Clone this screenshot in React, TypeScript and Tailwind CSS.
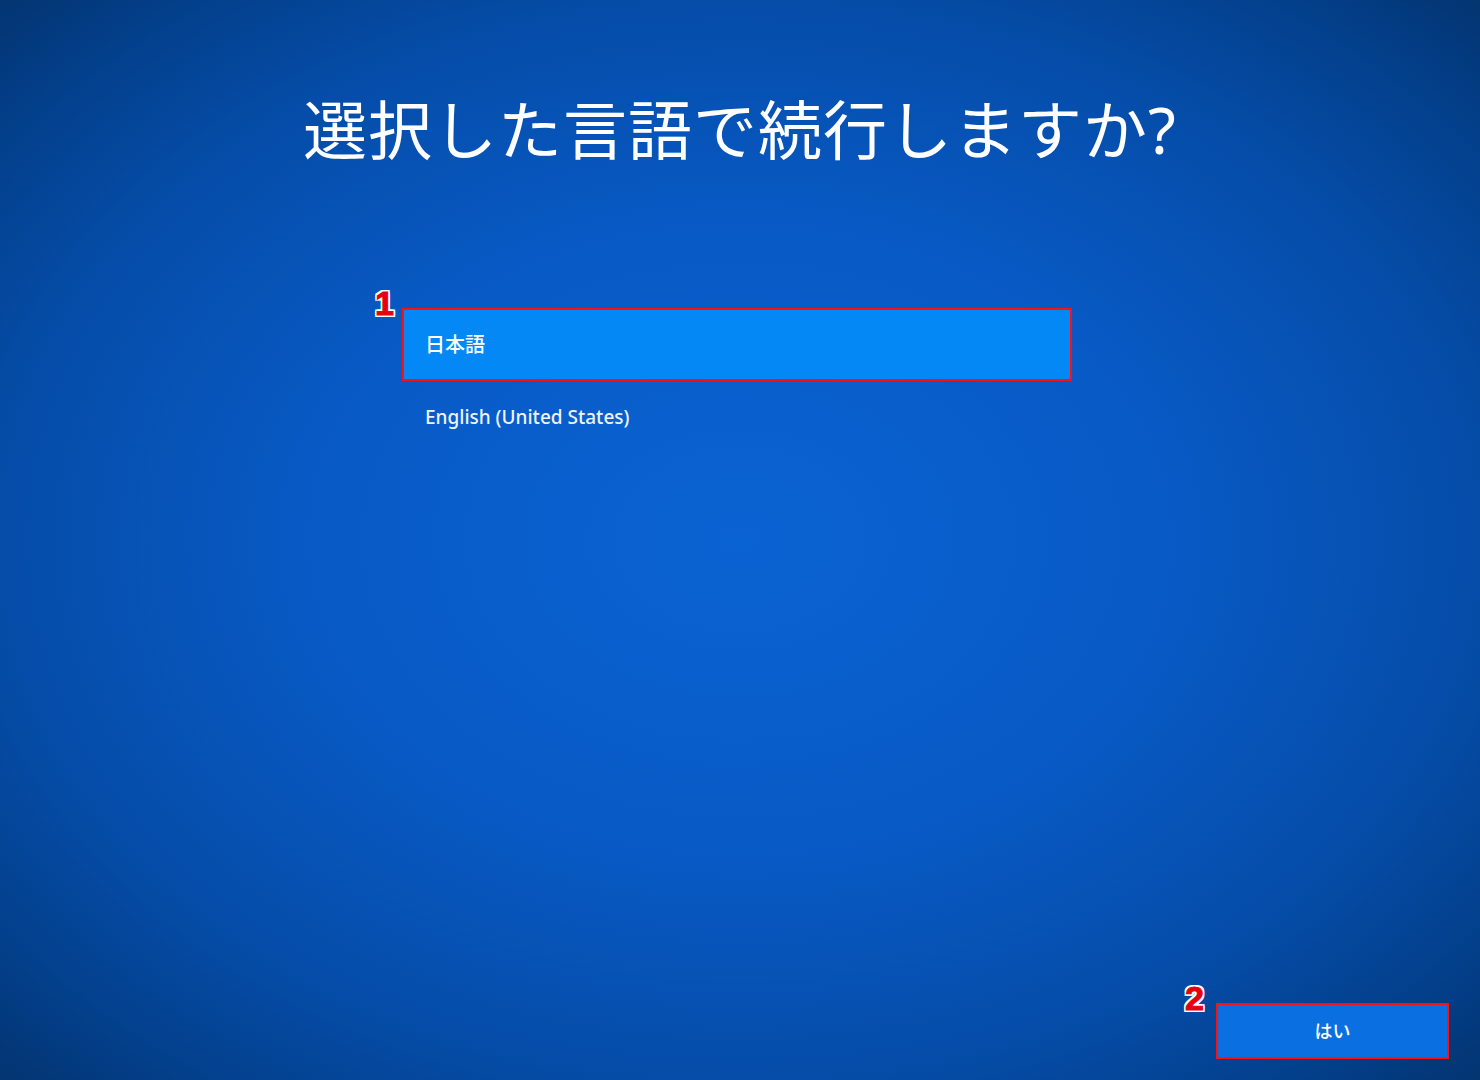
export default function App() {
  return (
    <div
      className="relative flex h-[1080px] w-[1480px] flex-col overflow-hidden text-white"
      style={{
        background:
          'radial-gradient(ellipse 72% 72% at 50% 50%, #0a63d2 0%, #085ac6 40%, #054ca7 70%, #033e88 88%, #03336c 100%)',
        fontFamily: '"Noto Sans", "Noto Sans CJK JP", sans-serif',
      }}
    >
      <h1 className="mt-[88px] text-center text-[64px] font-normal leading-[84px] tracking-[1px]">
        選択した言語で続行しますか?
      </h1>

      <div className="mt-[136px] flex flex-col pl-[402px]">
        <div className="relative">
          <span
            className="absolute -left-[27px] -top-[22px] text-[34px] font-black leading-none text-[#e60012] [-webkit-text-stroke:1px_#e60012] [text-shadow:2px_0_0_#fff,-2px_0_0_#fff,0_2px_0_#fff,0_-2px_0_#fff,2px_2px_0_#fff,-2px_-2px_0_#fff,2px_-2px_0_#fff,-2px_2px_0_#fff]"
            style={{ fontFamily: '"Liberation Sans", Arial, sans-serif' }}
          >
            1
          </span>
          <div className="flex h-[73px] w-[670px] items-center border-2 border-[#ff1010] bg-[#0488f5] pl-[21px] text-[20px] font-medium">
            日本語
          </div>
        </div>
        <div className="flex h-[73px] items-center pl-[23px] text-[19px] font-medium text-[#eef4ff]">
          English (United States)
        </div>
      </div>

      <div className="mt-auto mb-[21px] mr-[31px] flex justify-end">
        <div className="relative">
          <span
            className="absolute -left-[31px] -top-[22px] text-[34px] font-black leading-none text-[#e60012] [-webkit-text-stroke:1px_#e60012] [text-shadow:2px_0_0_#fff,-2px_0_0_#fff,0_2px_0_#fff,0_-2px_0_#fff,2px_2px_0_#fff,-2px_-2px_0_#fff,2px_-2px_0_#fff,-2px_2px_0_#fff]"
            style={{ fontFamily: '"Liberation Sans", Arial, sans-serif' }}
          >
            2
          </span>
          <div className="flex h-[56px] w-[233px] items-center justify-center border-2 border-[#ff1010] bg-[#0a6fe0] text-[18px] font-medium">
            はい
          </div>
        </div>
      </div>
    </div>
  )
}
